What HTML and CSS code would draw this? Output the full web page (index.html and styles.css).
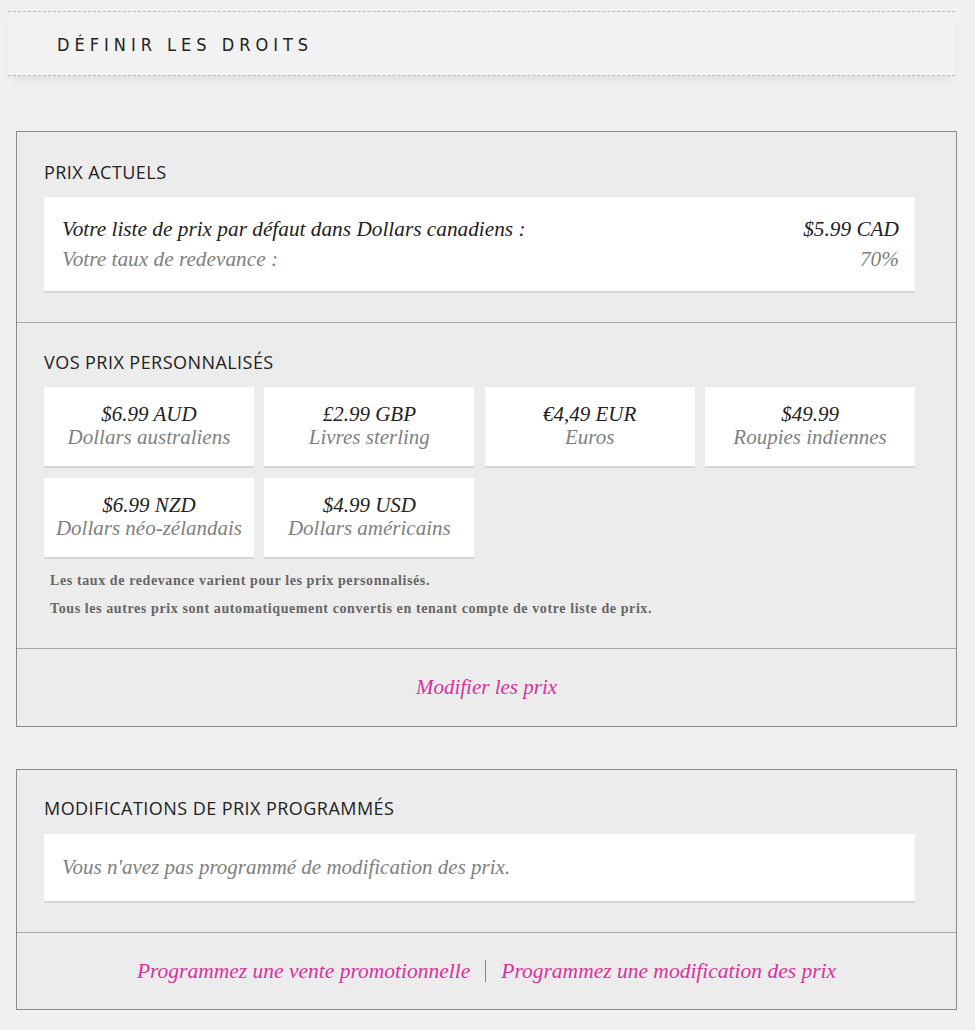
FILE: index.html
```html
<!DOCTYPE html>
<html lang="fr">
<head>
<meta charset="utf-8">
<title>Définir les droits</title>
<link rel="stylesheet" href="styles.css">
</head>
<body>
<div class="page">
  <header class="page-header">
    <h1>DÉFINIR LES DROITS</h1>
  </header>

  <section class="panel panel-prices">
    <div class="block block-current">
      <h2 class="block-title">PRIX ACTUELS</h2>
      <div class="card card-current">
        <div class="row row-main">
          <span>Votre liste de prix par défaut dans Dollars canadiens :</span>
          <span>$5.99 CAD</span>
        </div>
        <div class="row row-sub">
          <span>Votre taux de redevance :</span>
          <span>70%</span>
        </div>
      </div>
    </div>

    <div class="block block-custom">
      <h2 class="block-title">VOS PRIX PERSONNALISÉS</h2>
      <div class="price-grid">
        <div class="card price"><div class="amount">$6.99 AUD</div><div class="currency">Dollars australiens</div></div>
        <div class="card price"><div class="amount">£2.99 GBP</div><div class="currency">Livres sterling</div></div>
        <div class="card price"><div class="amount">€4,49 EUR</div><div class="currency">Euros</div></div>
        <div class="card price"><div class="amount">$49.99</div><div class="currency">Roupies indiennes</div></div>
        <div class="card price"><div class="amount">$6.99 NZD</div><div class="currency">Dollars néo-zélandais</div></div>
        <div class="card price"><div class="amount">$4.99 USD</div><div class="currency">Dollars américains</div></div>
      </div>
      <p class="note">Les taux de redevance varient pour les prix personnalisés.</p>
      <p class="note">Tous les autres prix sont automatiquement convertis en tenant compte de votre liste de prix.</p>
    </div>

    <div class="block block-actions">
      <a class="link" href="#">Modifier les prix</a>
    </div>
  </section>

  <section class="panel panel-scheduled">
    <div class="block block-scheduled">
      <h2 class="block-title">MODIFICATIONS DE PRIX PROGRAMMÉS</h2>
      <div class="card card-empty">Vous n'avez pas programmé de modification des prix.</div>
    </div>
    <div class="block block-actions block-actions-2">
      <a class="link" href="#">Programmez une vente promotionnelle</a>
      <span class="sep"></span>
      <a class="link" href="#">Programmez une modification des prix</a>
    </div>
  </section>
</div>
</body>
</html>
```

FILE: styles.css
```css
* { box-sizing: border-box; }

html, body {
  margin: 0;
  padding: 0;
  background: #f0f0f0;
}

body {
  font-family: "Liberation Serif", "DejaVu Serif", serif;
  color: #222;
}

.page {
  padding: 11px 18px 20px 16px;
}

.page-header {
  margin: 0 2px 0 -8px;
  height: 65px;
  border-top: 1px dashed #b8b8b8;
  border-bottom: 1px dashed #b8b8b8;
  background: #f2f2f2;
  box-shadow: 0 8px 10px -4px rgba(0, 0, 0, 0.07);
  display: flex;
  align-items: center;
  padding-left: 49px;
}

.page-header h1 {
  margin: 0;
  font-family: "DejaVu Sans Condensed", "DejaVu Sans", sans-serif;
  font-weight: normal;
  font-size: 18px;
  letter-spacing: 5px;
  color: #222;
  padding-top: 1px;
}

.panel {
  border: 1px solid #8a8a8a;
  background: #ececec;
  margin-top: 55px;
}

.panel-scheduled {
  margin-top: 42px;
}

.block {
  padding: 0 41px 0 27px;
}

.block + .block {
  border-top: 1px solid #a8a8a8;
}

.block-title {
  margin: 0;
  font-family: "Open Sans", "DejaVu Sans", sans-serif;
  font-weight: normal;
  font-size: 18px;
  letter-spacing: 0.45px;
  line-height: 22px;
  color: #222;
}

.card {
  background: #fff;
  border-bottom: 2px solid #d6d6d6;
}

/* current prices */
.block-current {
  padding-top: 29px;
  padding-bottom: 29px;
}

.block-current .block-title {
  margin-bottom: 14px;
}

.card-current {
  padding: 17px 16px 17px 18px;
  font-style: italic;
  font-size: 21.3px;
}

.row {
  display: flex;
  justify-content: space-between;
  line-height: 30px;
}

.row-main { color: #222; }
.row-sub { color: #7f7f7f; }

/* custom prices */
.block-custom {
  padding-top: 28px;
  padding-bottom: 25px;
}

.block-custom .block-title {
  margin-bottom: 14px;
}

.price-grid {
  display: grid;
  grid-template-columns: repeat(4, 1fr);
  column-gap: 10.5px;
  row-gap: 10px;
  margin-bottom: 8px;
}

.price {
  height: 81px;
  display: flex;
  flex-direction: column;
  justify-content: center;
  align-items: center;
  font-style: italic;
  font-size: 21px;
  line-height: 23px;
  padding-bottom: 1px;
}

.amount { color: #222; }
.currency { color: #7f7f7f; }

.note {
  margin: 0;
  padding-left: 6px;
  font-size: 14px;
  letter-spacing: 0.6px;
  line-height: 28px;
  color: #666;
  font-weight: bold;
}

/* actions */
.block-actions {
  height: 78px;
  display: flex;
  align-items: center;
  justify-content: center;
  padding-left: 0;
  padding-right: 0;
}

.link {
  font-style: italic;
  font-size: 21px;
  color: #d8329b;
  text-decoration: none;
}

/* scheduled */
.block-scheduled {
  padding-top: 27px;
  padding-bottom: 29px;
}

.block-scheduled .block-title {
  margin-bottom: 15px;
}

.card-empty {
  height: 69px;
  padding: 0 18px;
  display: flex;
  align-items: center;
  font-style: italic;
  font-size: 21px;
  color: #7f7f7f;
}

.block-actions-2 {
  height: 77px;
  gap: 15px;
}

.block-actions-2 .link {
  font-size: 21.5px;
}

.sep {
  width: 1px;
  height: 22px;
  background: #888;
}
```
